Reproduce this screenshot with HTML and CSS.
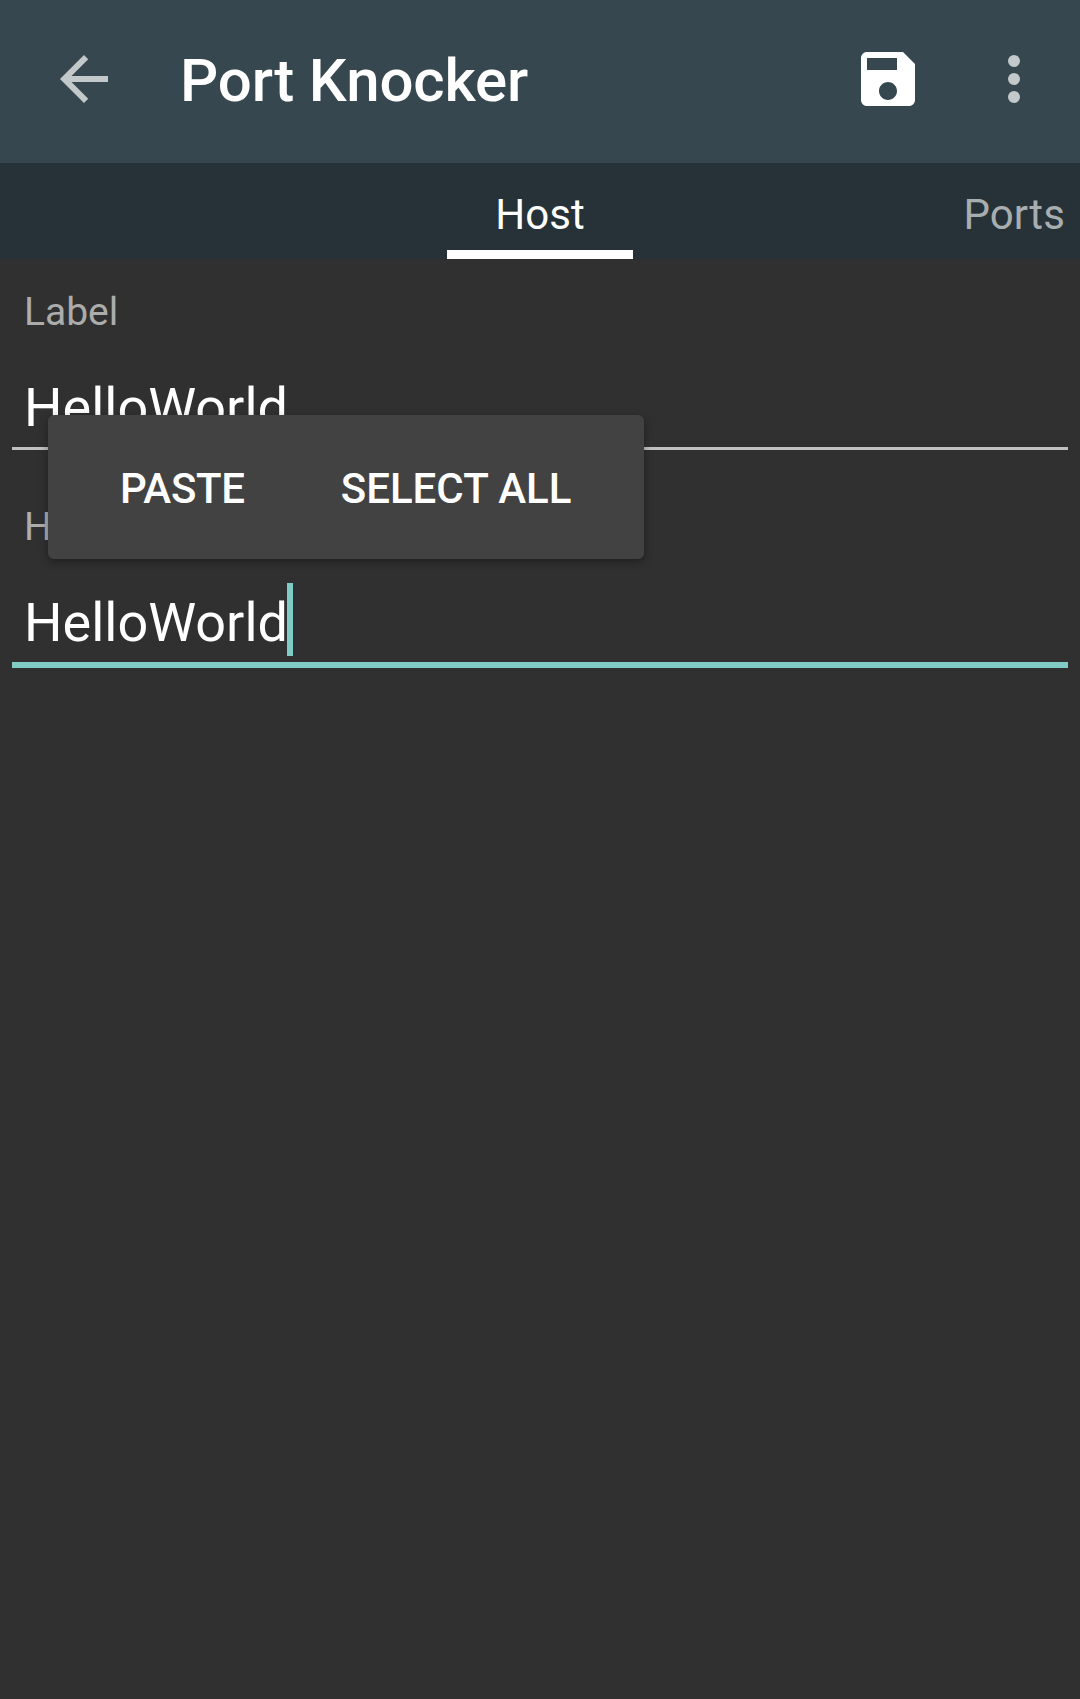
FILE: index.html
```html
<!DOCTYPE html>
<html lang="en">
<head>
<meta charset="utf-8">
<title>Port Knocker</title>
<link rel="stylesheet" href="styles.css">
</head>
<body>
<header class="toolbar">
  <svg class="icon icon-muted" viewBox="0 0 24 24"><path d="M20 11H7.83l5.59-5.59L12 4l-8 8 8 8 1.41-1.41L7.83 13H20v-2z"/></svg>
  <h1 class="title">Port Knocker</h1>
  <svg class="icon" viewBox="0 0 24 24"><path d="M17 3H5c-1.11 0-2 .9-2 2v14c0 1.1.89 2 2 2h14c1.1 0 2-.9 2-2V7l-4-4zm-5 16c-1.66 0-3-1.34-3-3s1.34-3 3-3 3 1.34 3 3-1.34 3-3 3zm3-10H5V5h10v4z"/></svg>
  <svg class="icon icon-muted icon-more" viewBox="0 0 24 24"><circle cx="12" cy="6" r="2"/><circle cx="12" cy="12" r="2"/><circle cx="12" cy="18" r="2"/></svg>
</header>
<nav class="tabs">
  <span class="tab tab-active">Host</span>
  <span class="tab tab-next">Ports</span>
</nav>
<main class="form">
  <div class="field">
    <div class="label">Label</div>
    <div class="value"><span>HelloWorld</span></div>
  </div>
  <div class="field field-focused">
    <div class="label">Host</div>
    <div class="value"><span>HelloWorld</span><i class="caret"></i></div>
  </div>
  <div class="popup">
    <span class="action">PASTE</span>
    <span>SELECT ALL</span>
  </div>
</main>
</body>
</html>
```
FILE: styles.css
```css
* { box-sizing: border-box; }

body {
  margin: 0;
  min-height: 1699px;
  background: #303030;
  color: #fff;
  font-family: Roboto, sans-serif;
  overflow-x: hidden;
}

.toolbar {
  display: flex;
  align-items: center;
  height: 163px;
  padding: 0 30px 5px 48px;
  background: #37474f;
}

.icon {
  flex: none;
  width: 72px;
  height: 72px;
  fill: #fff;
}

.icon-muted { fill: #c3c8ca; }

.icon-more { margin-left: 54px; }

.title {
  flex: 1;
  margin: 0;
  padding: 4px 0 0 60px;
  font-size: 60px;
  font-weight: 500;
  letter-spacing: -0.14px;
  line-height: 72px;
  white-space: nowrap;
}

.tabs {
  display: grid;
  grid-template-columns: 1fr 186px 1fr;
  height: 96px;
  background: #263238;
  font-size: 42px;
  line-height: 51px;
}

.tab { padding-top: 26px; }

.tab-active {
  grid-column: 2;
  border-bottom: 9px solid #fff;
  text-align: center;
}

.tab-next {
  padding-right: 15px;
  color: #a8adaf;
  letter-spacing: 0.15px;
  text-align: right;
}

.form {
  position: relative;
  padding: 0 12px;
}

.field {
  height: 215px;
  padding-top: 30px;
}

.label {
  padding-left: 12px;
  color: #acacac;
  font-size: 39px;
  line-height: 47px;
}

.value {
  display: flex;
  height: 74px;
  margin-top: 40px;
  padding-left: 12px;
  border-bottom: 3px solid #c1c1c1;
  font-size: 54px;
  line-height: 63px;
}

.field-focused .value {
  height: 77px;
  border-bottom: 6px solid #80cbc4;
}

.caret {
  width: 6px;
  height: 73px;
  margin: -8px 0 0 -1px;
  background: #80cbc4;
}

/* Floating text-selection menu */
.popup {
  position: absolute;
  top: 156px;
  left: 48px;
  display: flex;
  align-items: center;
  gap: 96px;
  width: 596px;
  height: 144px;
  padding: 3px 72px 0;
  border-radius: 6px;
  background: #424242;
  box-shadow: 0 3px 8px rgba(0, 0, 0, 0.35);
  font-size: 42px;
  font-weight: 500;
  line-height: 49px;
  white-space: nowrap;
}

.action { letter-spacing: -0.3px; }
```
